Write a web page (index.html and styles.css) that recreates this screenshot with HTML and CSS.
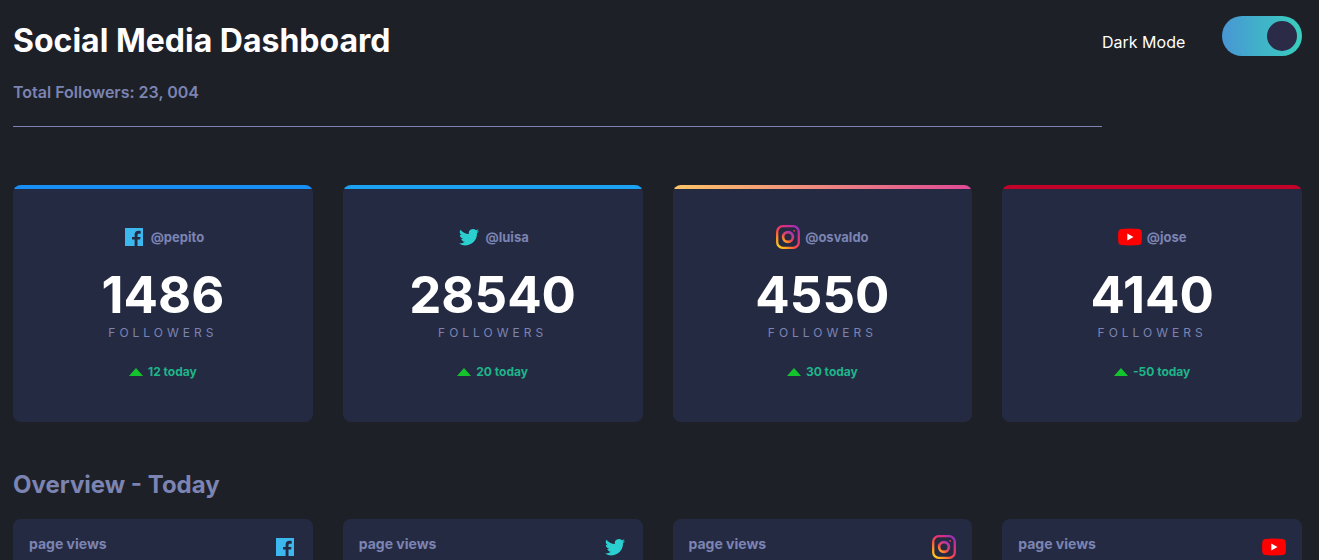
FILE: index.html
```html
<!DOCTYPE html>
<html lang="en">
<head>
<meta charset="utf-8">
<meta name="viewport" content="width=device-width, initial-scale=1">
<title>Social Media Dashboard</title>
<link rel="stylesheet" href="styles.css">
</head>
<body>
<svg class="sprite" aria-hidden="true">
  <defs>
    <radialGradient id="ig-frame" gradientUnits="userSpaceOnUse" cx="2" cy="23" r="29">
      <stop offset="0" stop-color="#ffd21f"/>
      <stop offset="0.3" stop-color="#ff9a1f"/>
      <stop offset="0.6" stop-color="#ff4b45"/>
      <stop offset="0.8" stop-color="#d92e86"/>
      <stop offset="1" stop-color="#8f2fc4"/>
    </radialGradient>
    <radialGradient id="ig-lens" gradientUnits="userSpaceOnUse" cx="7" cy="18" r="14">
      <stop offset="0" stop-color="#ffb31f"/>
      <stop offset="0.35" stop-color="#ff7a2f"/>
      <stop offset="0.65" stop-color="#e8405f"/>
      <stop offset="1" stop-color="#9c35bd"/>
    </radialGradient>
    <symbol id="facebook" viewBox="0 0 24 24">
      <path fill="#3db8ee" d="M3 3h18v18h-5.500v-6.400h2.600l.4-2.700h-3v-1.600c0-1 .5-1.500 1.500-1.500h1.700V6c-.5-.1-1.300-.2-2.200-.2-2.500 0-3.900 1.400-3.900 3.800v2.300h-2.600v2.700h2.600V21H3z"/>
    </symbol>
    <symbol id="twitter" viewBox="0 0 24 24">
      <path fill="#2bcfcf" d="M22 5.900c-.7.300-1.500.5-2.300.6.8-.5 1.500-1.300 1.800-2.200-.8.500-1.700.8-2.600 1A4.100 4.100 0 0 0 11.900 9C8.500 8.800 5.500 7.200 3.500 4.700A4.100 4.100 0 0 0 4.700 10.200c-.7 0-1.300-.2-1.900-.5v.1c0 2 1.400 3.600 3.300 4-.6.200-1.200.2-1.900.1.500 1.600 2 2.800 3.800 2.900A8.300 8.300 0 0 1 2 18.500 11.700 11.700 0 0 0 20 8.100c.8-.6 1.500-1.300 2-2.200z"/>
    </symbol>
    <symbol id="instagram" viewBox="0 0 24 24">
      <rect fill="none" stroke="url(#ig-frame)" stroke-width="2.300" x="1.200" y="1.200" width="21.600" height="21.600" rx="5.600"/>
      <circle fill="none" stroke="url(#ig-lens)" stroke-width="2.600" cx="12" cy="12" r="4.900"/>
      <circle cx="18.200" cy="5.800" r="0.900" fill="#e8404f"/>
    </symbol>
    <symbol id="youtube" viewBox="0 0 24 24">
      <path fill="#f00" d="M3.500 3.900Q12 3.200 20.500 3.900Q23.400 4.200 23.700 7Q24.200 12 23.700 17Q23.400 19.800 20.500 20.100Q12 20.800 3.500 20.100Q.6 19.800.3 17Q-.2 12 .3 7Q.6 4.200 3.500 3.900z"/>
      <path fill="#fff" d="M9.300 8.600v6.800l6.200-3.400z"/>
    </symbol>
  </defs>
</svg>

<div class="page">
  <header class="header">
    <div class="header__intro">
      <h1 class="header__title">Social Media Dashboard</h1>
      <p class="header__total">Total Followers: 23, 004</p>
    </div>
    <div class="mode">
      <label class="mode__label" for="dark-mode">Dark Mode</label>
      <input class="mode__switch" type="checkbox" role="switch" id="dark-mode" checked>
    </div>
  </header>

  <main>
    <section class="grid" aria-label="Followers">
      <article class="card card--facebook">
        <p class="card__user"><svg class="icon"><use href="#facebook"/></svg>@pepito</p>
        <p class="card__count">1486</p>
        <p class="card__unit">Followers</p>
        <p class="card__today"><svg class="arrow" viewBox="0 0 14 8"><path d="M7 0l7 8H0z"/></svg>12 today</p>
      </article>
      <article class="card card--twitter">
        <p class="card__user"><svg class="icon"><use href="#twitter"/></svg>@luisa</p>
        <p class="card__count">28540</p>
        <p class="card__unit">Followers</p>
        <p class="card__today"><svg class="arrow" viewBox="0 0 14 8"><path d="M7 0l7 8H0z"/></svg>20 today</p>
      </article>
      <article class="card card--instagram">
        <p class="card__user"><svg class="icon"><use href="#instagram"/></svg>@osvaldo</p>
        <p class="card__count">4550</p>
        <p class="card__unit">Followers</p>
        <p class="card__today"><svg class="arrow" viewBox="0 0 14 8"><path d="M7 0l7 8H0z"/></svg>30 today</p>
      </article>
      <article class="card card--youtube">
        <p class="card__user"><svg class="icon"><use href="#youtube"/></svg>@jose</p>
        <p class="card__count">4140</p>
        <p class="card__unit">Followers</p>
        <p class="card__today"><svg class="arrow" viewBox="0 0 14 8"><path d="M7 0l7 8H0z"/></svg>-50 today</p>
      </article>
    </section>

    <h2 class="overview">Overview - Today</h2>
    <section class="grid" aria-label="Overview">
      <article class="stat"><h3 class="stat__name">page views</h3><svg class="icon"><use href="#facebook"/></svg></article>
      <article class="stat"><h3 class="stat__name">page views</h3><svg class="icon"><use href="#twitter"/></svg></article>
      <article class="stat"><h3 class="stat__name">page views</h3><svg class="icon"><use href="#instagram"/></svg></article>
      <article class="stat"><h3 class="stat__name">page views</h3><svg class="icon"><use href="#youtube"/></svg></article>
    </section>
  </main>
</div>
</body>
</html>
```
FILE: styles.css
```css
:root {
  --bg: #1e2028;
  --card: #252a43;
  --muted: #7b84b2;
  --white: #fff;
  --green: #1eb589;
}

* {
  box-sizing: border-box;
  margin: 0;
}

body {
  background: var(--bg);
  color: var(--muted);
  font-family: Inter, "Liberation Sans", sans-serif;
  font-size: 16px;
  line-height: 20px;
}

.sprite {
  position: absolute;
  width: 0;
  height: 0;
}

.page {
  height: 100vh;
  overflow-y: auto;
  scrollbar-width: none;
  padding: 16px 17px 0 13px;
}

.header {
  display: flex;
  align-items: flex-start;
  margin-bottom: 58px;
}

.header__intro {
  flex: 1;
  padding-bottom: 24px;
  border-bottom: 1px solid var(--muted);
}

.header__title {
  margin-bottom: 16px;
  padding-top: 4px;
  color: var(--white);
  font-size: 32px;
  font-weight: 700;
  line-height: 42px;
}

.header__total {
  padding-top: 4px;
  font-weight: 600;
}

.mode {
  display: flex;
  align-items: center;
  justify-content: space-between;
  width: 200px;
}

.mode__label {
  padding-top: 12px;
  color: var(--white);
}

.mode__switch {
  appearance: none;
  display: flex;
  justify-content: flex-end;
  width: 80px;
  height: 40px;
  margin: 0;
  padding: 5px;
  border-radius: 20px;
  background: linear-gradient(90deg, #4896d4, #38cfbd);
  cursor: pointer;
}

.mode__switch::before {
  content: "";
  width: 30px;
  height: 30px;
  border-radius: 50%;
  background: #2b2b48;
}

.mode__switch:not(:checked) {
  justify-content: flex-start;
}

.grid {
  display: grid;
  grid-template-columns: repeat(4, 1fr);
  gap: 30px;
}

.card {
  display: flex;
  flex-direction: column;
  align-items: center;
  padding: 40px 16px;
  border-radius: 8px;
  background: linear-gradient(90deg, var(--from), var(--to)) top / 100% 4px no-repeat var(--card);
}

.card--facebook { --from: #198ff5; --to: #198ff5; }
.card--twitter { --from: #1da1f2; --to: #1da1f2; }
.card--instagram { --from: #fdc468; --to: #df4996; }
.card--youtube { --from: #c4032b; --to: #c4032b; }

.card__user {
  display: flex;
  align-items: center;
  gap: 5px;
  margin-bottom: 16px;
  font-size: 13px;
  font-weight: 700;
  line-height: 24px;
}

.card__count {
  color: var(--white);
  font-size: 51px;
  font-weight: 700;
  line-height: 60px;
}

.card__unit {
  font-size: 12px;
  letter-spacing: 4px;
  line-height: 16px;
  margin-bottom: 21px;
  text-transform: uppercase;
}

.card__today {
  display: flex;
  align-items: center;
  gap: 5px;
  color: var(--green);
  font-size: 12px;
  font-weight: 700;
  line-height: 20px;
}

.icon {
  width: 24px;
  height: 24px;
}

.arrow {
  width: 14px;
  height: 8px;
  fill: #14c42d;
}

.overview {
  margin: 48px 0 19px;
  font-size: 24px;
  font-weight: 700;
  line-height: 30px;
}

.stat {
  display: flex;
  justify-content: space-between;
  padding: 16px 16px 48px;
  border-radius: 8px;
  background: var(--card);
}

.stat__name {
  font-size: 14px;
  font-weight: 700;
  line-height: 18px;
}
```
